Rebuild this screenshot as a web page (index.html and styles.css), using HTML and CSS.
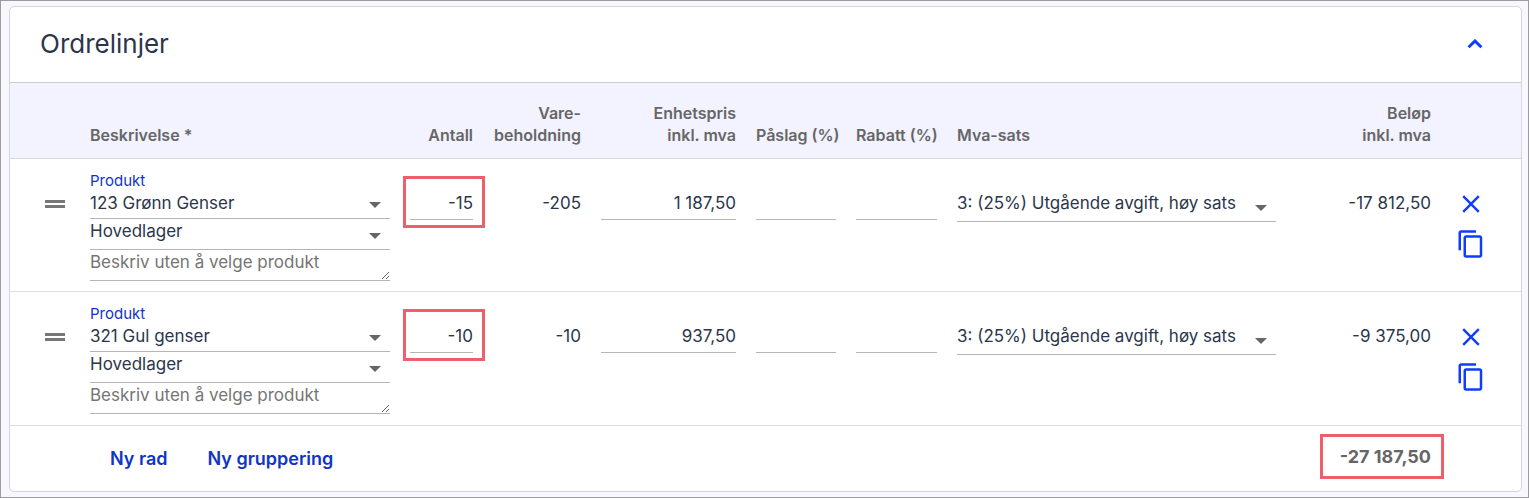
FILE: index.html
```html
<!DOCTYPE html>
<html lang="no">
<head>
<meta charset="utf-8">
<title>Ordrelinjer</title>
<link rel="stylesheet" href="styles.css">
</head>
<body>
<svg class="sprite" aria-hidden="true">
  <symbol id="caret" viewBox="0 0 12 6"><path d="M0 0h12L6 6z" fill="currentColor"/></symbol>
  <symbol id="drag" viewBox="0 0 20 8"><path d="M0 0h20v3H0zM0 5h20v3H0z" fill="currentColor"/></symbol>
  <symbol id="close" viewBox="0 0 30 30"><path d="M7.2 7.2l15.6 15.6M22.8 7.2L7.2 22.8" fill="none" stroke="currentColor" stroke-width="2.4"/></symbol>
  <symbol id="copy" viewBox="0 0 24 24"><path d="M16 1H4c-1.1 0-2 .9-2 2v14h2V3h12V1zm3 4H8c-1.1 0-2 .9-2 2v14c0 1.100.9 2 2 2h11c1.100 0 2-.9 2-2V7c0-1.100-.9-2-2-2zm0 16H8V7h11v14z" fill="currentColor"/></symbol>
</svg>
<main class="card">
  <header class="card-header">
    <h1 class="title">Ordrelinjer</h1>
    <button class="icon-button" type="button" aria-label="Skjul ordrelinjer">
      <svg class="chevron" viewBox="0 0 16 10"><path d="M1.600 8.300L8 2l6.400 6.300" fill="none" stroke="currentColor" stroke-width="3"/></svg>
    </button>
  </header>
  <table class="lines">
    <colgroup>
      <col class="col-drag"><col class="col-description"><col class="col-quantity"><col class="col-stock"><col class="col-price">
      <col class="col-markup"><col class="col-discount"><col class="col-vat"><col><col class="col-actions">
    </colgroup>
    <thead>
      <tr>
        <td></td>
        <th scope="col">Beskrivelse *</th>
        <th scope="col" class="number">Antall</th>
        <th scope="col" class="number">Vare-<br>beholdning</th>
        <th scope="col" class="number">Enhetspris<br>inkl. mva</th>
        <th scope="col">Påslag (%)</th>
        <th scope="col">Rabatt (%)</th>
        <th scope="col">Mva-sats</th>
        <th scope="col" class="number">Beløp<br>inkl. mva</th>
        <td></td>
      </tr>
    </thead>
    <tbody>
      <tr>
        <td class="drag-cell"><svg class="drag"><use href="#drag"/></svg></td>
        <td class="description">
          <label class="label" for="product1">Produkt</label>
          <div class="select"><select id="product1"><option>123 Grønn Genser</option></select><svg class="caret"><use href="#caret"/></svg></div>
          <div class="select tall"><select aria-label="Lager"><option>Hovedlager</option></select><svg class="caret"><use href="#caret"/></svg></div>
          <textarea class="note" rows="1" aria-label="Beskrivelse" placeholder="Beskriv uten å velge produkt"></textarea>
        </td>
        <td class="highlight"><input class="field" type="text" aria-label="Antall" value="-15"></td>
        <td class="number">-205</td>
        <td><input class="field" type="text" aria-label="Enhetspris inkl. mva" value="1 187,50"></td>
        <td><input class="field" type="text" aria-label="Påslag (%)"></td>
        <td><input class="field" type="text" aria-label="Rabatt (%)"></td>
        <td><div class="select tall"><select aria-label="Mva-sats"><option>3: (25%) Utgående avgift, høy sats</option></select><svg class="caret"><use href="#caret"/></svg></div></td>
        <td class="number">-17 812,50</td>
        <td class="actions"><div class="action-list">
          <button class="icon-button" type="button" aria-label="Slett rad"><svg class="icon"><use href="#close"/></svg></button>
          <button class="icon-button" type="button" aria-label="Kopier rad"><svg class="icon"><use href="#copy"/></svg></button>
        </div></td>
      </tr>
      <tr>
        <td class="drag-cell"><svg class="drag"><use href="#drag"/></svg></td>
        <td class="description">
          <label class="label" for="product2">Produkt</label>
          <div class="select"><select id="product2"><option>321 Gul genser</option></select><svg class="caret"><use href="#caret"/></svg></div>
          <div class="select tall"><select aria-label="Lager"><option>Hovedlager</option></select><svg class="caret"><use href="#caret"/></svg></div>
          <textarea class="note" rows="1" aria-label="Beskrivelse" placeholder="Beskriv uten å velge produkt"></textarea>
        </td>
        <td class="highlight"><input class="field" type="text" aria-label="Antall" value="-10"></td>
        <td class="number">-10</td>
        <td><input class="field" type="text" aria-label="Enhetspris inkl. mva" value="937,50"></td>
        <td><input class="field" type="text" aria-label="Påslag (%)"></td>
        <td><input class="field" type="text" aria-label="Rabatt (%)"></td>
        <td><div class="select tall"><select aria-label="Mva-sats"><option>3: (25%) Utgående avgift, høy sats</option></select><svg class="caret"><use href="#caret"/></svg></div></td>
        <td class="number">-9 375,00</td>
        <td class="actions"><div class="action-list">
          <button class="icon-button" type="button" aria-label="Slett rad"><svg class="icon"><use href="#close"/></svg></button>
          <button class="icon-button" type="button" aria-label="Kopier rad"><svg class="icon"><use href="#copy"/></svg></button>
        </div></td>
      </tr>
    </tbody>
    <tfoot>
      <tr>
        <td></td>
        <td colspan="7"><div class="footer-actions"><button class="text-button" type="button">Ny rad</button><button class="text-button" type="button">Ny gruppering</button></div></td>
        <td class="number total"><span class="total-value">-27 187,50</span></td>
        <td></td>
      </tr>
    </tfoot>
  </table>
</main>
</body>
</html>
```
FILE: styles.css
```css
*, *::after { box-sizing: border-box; }

body {
  margin: 0;
  min-height: 100vh;
  padding: 5px 6px 5px 8px;
  border: 1px solid #9c9ca0;
  background: #f7f7fd;
  color: #2b364c;
  font: 17px/24px Inter, Roboto, sans-serif;
}

.sprite { position: absolute; width: 0; height: 0; }

.card {
  border: 1px solid #d5d6dc;
  border-radius: 5px;
  background: #fff;
  overflow: hidden;
}

.card-header {
  display: flex;
  align-items: center;
  justify-content: space-between;
  height: 76px;
  padding: 0 31px 2px 30px;
  border-bottom: 1px solid #cbccd0;
}

.title { margin: 0; font-size: 26px; line-height: 32px; font-weight: 400; }

.icon-button {
  display: flex;
  align-items: center;
  justify-content: center;
  width: 30px;
  height: 30px;
  padding: 0;
  border: 0;
  background: none;
  color: #0f3dff;
}

.chevron { width: 16px; height: 10px; }
.icon { width: 30px; height: 30px; }

.lines { width: 100%; table-layout: fixed; border-collapse: separate; border-spacing: 0; }
.col-drag { width: 70px; }
.col-description { width: 320px; }
.col-quantity { width: 83px; }
.col-stock { width: 108px; }
.col-price { width: 155px; }
.col-markup { width: 100px; }
.col-discount { width: 101px; }
.col-vat { width: 339px; }
.col-actions { width: 80px; }

th, td { padding: 0 10px; text-align: left; vertical-align: top; }
.number { text-align: right; }

thead th, thead td {
  height: 76px;
  padding-bottom: 12px;
  border-bottom: 1px solid #d9dade;
  background: #f2f3fe;
  color: #666;
  font-size: 16px;
  line-height: 22px;
  font-weight: 600;
  vertical-align: bottom;
  white-space: nowrap;
}

tbody td { padding-top: 32px; border-bottom: 1px solid #dddee0; }
tbody .description { padding-top: 12px; padding-bottom: 10px; }
tbody tr:last-child .description { padding-bottom: 11px; }
tbody .drag-cell { padding: 41px 0 0 35px; }
tbody .actions { padding: 30px 0 0 15px; }

.drag { display: block; width: 20px; height: 8px; color: #777; }
.label { display: block; font-size: 15px; line-height: 20px; color: #1034c8; }

.select { display: grid; height: 28px; border-bottom: 1px solid #b5b5b5; }
.select select, .caret { grid-area: 1 / 1; }
.select.tall { height: 31px; }
.select select {
  appearance: none;
  width: 100%;
  height: 24px;
  padding: 0;
  border: 0;
  background: none;
  color: inherit;
  font: inherit;
}
.caret {
  align-self: center;
  justify-self: end;
  width: 12px;
  height: 6px;
  margin-right: 9px;
  color: #666;
  pointer-events: none;
}
.tall .caret { margin-top: 3px; }

.note, .field {
  display: block;
  width: 100%;
  padding: 0;
  border: 0;
  border-bottom: 1px solid #b5b5b5;
  border-radius: 0;
  background: none;
  color: inherit;
  font: inherit;
}
.note { height: 31px; resize: vertical; }
.note::placeholder { color: #757575; }
.field { height: 29px; padding-bottom: 4px; text-align: right; }

.highlight { position: relative; }
.highlight::after {
  content: "";
  position: absolute;
  top: 17px;
  left: 3px;
  width: 82px;
  height: 52px;
  border: 3px solid #ee5f6c;
  pointer-events: none;
}

.action-list { display: flex; flex-direction: column; gap: 10px; }

tfoot td { height: 65px; vertical-align: middle; }
.footer-actions { display: flex; gap: 40px; padding-left: 20px; }
.text-button {
  padding: 0;
  border: 0;
  background: none;
  color: #1034c8;
  font: 600 18px/24px Inter, Roboto, sans-serif;
}

.total { padding-bottom: 3px; color: #666; font-size: 18px; font-weight: 700; }
.total-value { position: relative; }
.total-value::after {
  content: "";
  position: absolute;
  inset: -12px -13px -12px -20px;
  border: 3px solid #ee5f6c;
}
```
